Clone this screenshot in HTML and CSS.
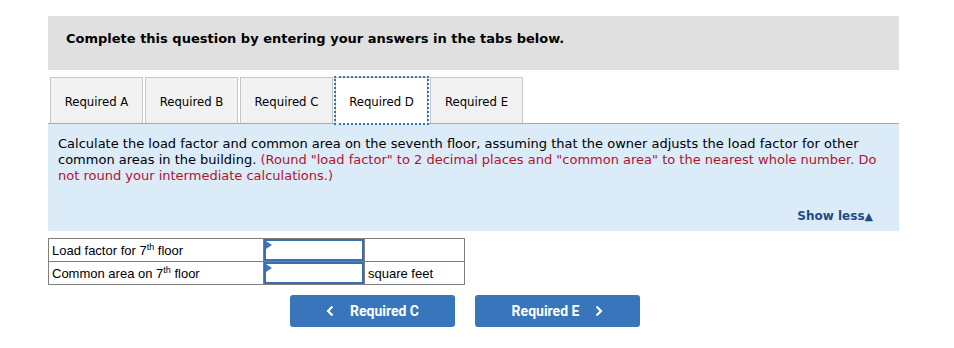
FILE: index.html
```html
<!DOCTYPE html>
<html lang="en">

<head>
    <meta charset="UTF-8" />
    <title>Required D</title>
    <link rel="stylesheet" href="styles.css">
</head>

<body>
    <div class="question">
        <div class="question-header">Complete this question by entering your answers in the tabs below.</div>

        <div class="tabs">
            <div class="tab">Required A</div>
            <div class="tab">Required B</div>
            <div class="tab">Required C</div>
            <div class="tab active">Required D</div>
            <div class="tab">Required E</div>
        </div>

        <div class="tab-panel">
            <p class="prompt">Calculate the load factor and common area on the seventh floor, assuming that the owner adjusts the load factor for other common areas in the building. <span class="note">(Round "load factor" to 2 decimal places and "common area" to the nearest whole number. Do not round your intermediate calculations.)</span></p>
            <div class="show-less">Show less<span class="arrow">&#9650;</span></div>
        </div>

        <table class="answers">
            <tr>
                <td class="label">Load factor for 7<sup>th</sup> floor</td>
                <td class="entry"><div class="field"></div></td>
                <td class="unit"></td>
            </tr>
            <tr>
                <td class="label">Common area on 7<sup>th</sup> floor</td>
                <td class="entry"><div class="field"></div></td>
                <td class="unit">square feet</td>
            </tr>
        </table>

        <div class="nav">
            <button class="nav-btn">
                <svg class="chev" width="8" height="12" viewBox="0 0 8 12"><polyline points="6.5,1.5 2,6 6.5,10.5" fill="none" stroke="#fff" stroke-width="2.2" /></svg>
                Required C
            </button>
            <button class="nav-btn">
                Required E
                <svg class="chev" width="8" height="12" viewBox="0 0 8 12"><polyline points="1.5,1.5 6,6 1.5,10.5" fill="none" stroke="#fff" stroke-width="2.2" /></svg>
            </button>
        </div>
    </div>
</body>

</html>
```

FILE: styles.css
```css
body {
    margin: 0;
    background: #fff;
    font-family: "DejaVu Sans", Verdana, sans-serif;
    color: #000;
}

.question {
    width: 851px;
    margin-left: 48px;
    padding-top: 16px;
}

.question-header {
    height: 54px;
    box-sizing: border-box;
    padding: 15px 18px;
    background-color: #e0e0e0;
    font-size: 13px;
    font-weight: bold;
}

.tabs {
    display: flex;
    gap: 2px;
    margin-top: 7px;
    padding-left: 2px;
    border-bottom: 1px solid #a9a9a9;
}

.tab {
    width: 93px;
    height: 46px;
    box-sizing: border-box;
    display: flex;
    align-items: center;
    justify-content: center;
    padding-top: 1px;
    background-color: #f2f2f2;
    border: 1px solid #c6c6c6;
    border-bottom: none;
    font-family: "DejaVu Sans Condensed", Tahoma, sans-serif;
    font-size: 13px;
}

.tab.active {
    background-color: #fff;
    outline: 2px dotted #3b73b9;
    outline-offset: -1px;
    position: relative;
    margin-bottom: -1px;
    height: 47px;
}

.tab-panel {
    height: 107px;
    box-sizing: border-box;
    padding: 12px 10px 0 10px;
    background-color: #dbebf8;
    display: flex;
    flex-direction: column;
}

.prompt {
    margin: 0;
    font-size: 13px;
    line-height: 16px;
}

.note {
    color: #b3132c;
}

.show-less {
    margin-top: auto;
    margin-bottom: 8px;
    align-self: flex-end;
    margin-right: 16px;
    font-size: 12px;
    font-weight: bold;
    color: #1d4b86;
}

.show-less .arrow {
    font-size: 11px;
}

.answers {
    margin-top: 7px;
    border-collapse: collapse;
    font-family: "Liberation Sans", Arial, sans-serif;
    font-size: 13px;
}

.answers td {
    border: 1px solid #7f7f7f;
    height: 22px;
    padding: 0;
}

.answers .label {
    width: 211px;
    padding-left: 3px;
}

.answers .label sup {
    font-size: 9px;
    line-height: 0;
}

.answers .entry {
    width: 100px;
}

.field {
    height: 22px;
    box-sizing: border-box;
    border: 2px solid #3a6eae;
    position: relative;
}

.field::before {
    content: "";
    position: absolute;
    left: 0;
    top: 0;
    border-top: 4px solid transparent;
    border-bottom: 4px solid transparent;
    border-left: 6px solid #3a78c9;
}

.answers .unit {
    width: 96px;
    padding-left: 3px;
}

.nav {
    display: flex;
    gap: 20px;
    margin-top: 10px;
    margin-left: 242px;
}

.nav-btn {
    width: 165px;
    height: 32px;
    border: none;
    border-radius: 3px;
    background-color: #3875bb;
    color: #fff;
    font-family: Roboto, sans-serif;
    font-size: 14px;
    font-weight: bold;
    display: flex;
    align-items: center;
    justify-content: center;
    gap: 16px;
}
```
